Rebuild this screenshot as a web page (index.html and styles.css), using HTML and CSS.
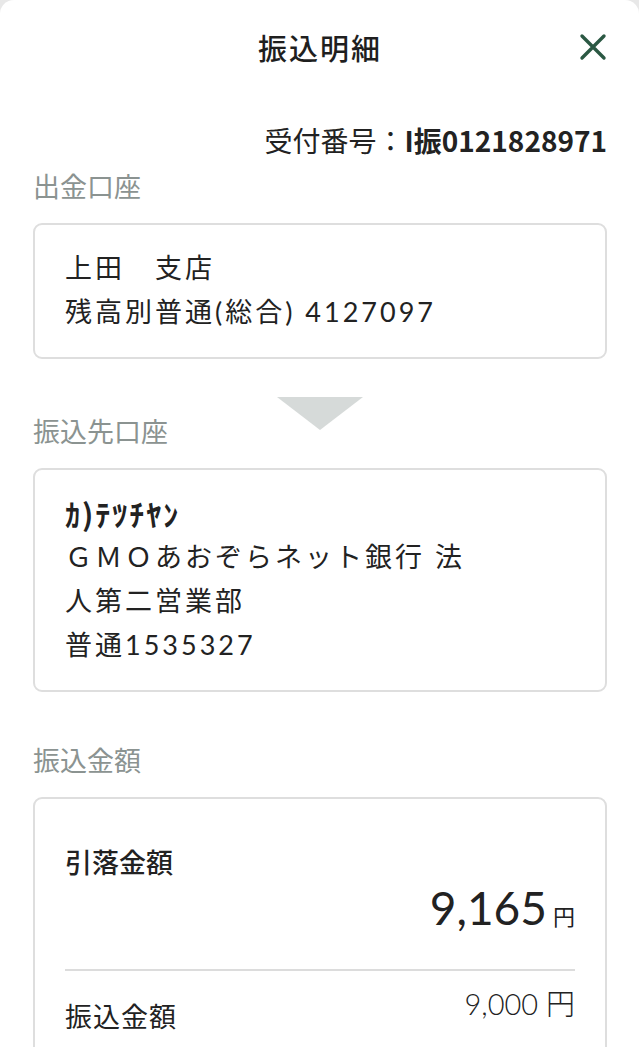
FILE: index.html
```html
<!DOCTYPE html>
<html lang="ja">
<head>
    <meta charset="UTF-8">
    <meta name="viewport" content="width=device-width, initial-scale=1.0">
    <title>振込明細</title>
    <link rel="stylesheet" href="styles.css">
</head>
<body>
    <div class="sheet">
        <div class="header">
            <h1 class="title">振込明細</h1>
            <button class="close" aria-label="閉じる">
                <svg width="28" height="28" viewBox="0 0 28 28">
                    <path d="M3 3 L25 25 M25 3 L3 25" stroke="#2b5843" stroke-width="3.4" stroke-linecap="round" fill="none"/>
                </svg>
            </button>
        </div>

        <p class="receipt">受付番号：<span class="receipt-no">I振0121828971</span></p>

        <h2 class="section-label">出金口座</h2>
        <div class="card">
            <p class="line">上田　支店</p>
            <p class="line">残高別普通(総合) 4127097</p>
        </div>

        <div class="arrow"></div>

        <h2 class="section-label label-after-arrow">振込先口座</h2>
        <div class="card">
            <p class="line name">ｶ)ﾃﾂﾁﾔﾝ</p>
            <p class="line">ＧＭＯあおぞらネット銀行 法</p>
            <p class="line">人第二営業部</p>
            <p class="line">普通1535327</p>
        </div>

        <h2 class="section-label label-spaced">振込金額</h2>
        <div class="card amount-card">
            <p class="debit-label">引落金額</p>
            <p class="debit-amount">9,165<span class="yen">円</span></p>
            <div class="divider"></div>
            <div class="row">
                <span class="row-label">振込金額</span>
                <span class="row-amount">9,000 円</span>
            </div>
        </div>
    </div>
</body>
</html>
```

FILE: styles.css
```css
body {
    margin: 0;
    background-color: #e8e8e8;
    font-family: Lato, "Noto Sans CJK JP", sans-serif;
    color: #222;
}
p, h1, h2 {
    margin: 0;
}
.sheet {
    background-color: #fff;
    border-radius: 14px 14px 0 0;
    min-height: 1047px;
    padding: 0 32px 0 33px;
    box-sizing: border-box;
    overflow: hidden;
}
.header {
    display: grid;
    grid-template-columns: 1fr auto 1fr;
    align-items: center;
    height: 94px;
}
.title {
    grid-column: 2;
    font-family: "Noto Sans CJK JP", sans-serif;
    font-size: 29px;
    font-weight: 500;
    color: #1f1f1f;
    letter-spacing: 2px;
}
.close {
    justify-self: end;
    background: none;
    border: none;
    padding: 0;
    display: flex;
    cursor: pointer;
}
.receipt {
    margin-top: 28px;
    text-align: right;
    font-family: "Noto Sans CJK JP", sans-serif;
    font-size: 28px;
    line-height: 36px;
    color: #222;
}
.receipt-no {
    font-weight: 700;
}
.section-label {
    margin-top: 10px;
    margin-bottom: 19px;
    font-family: "Noto Sans CJK JP", sans-serif;
    font-size: 27px;
    font-weight: 400;
    line-height: 36px;
    color: #8b9391;
}
.label-after-arrow {
    margin-top: -17px;
}
.label-spaced {
    margin-top: 50px;
}
.card {
    border: 2px solid #dedede;
    border-radius: 9px;
    padding: 21px 30px 23px;
}
.line {
    font-size: 27px;
    line-height: 44px;
    letter-spacing: 3px;
}
.name {
    font-family: "Noto Sans CJK JP", sans-serif;
    font-size: 30px;
    font-weight: 700;
    letter-spacing: 2px;
}
.arrow {
    width: 0;
    height: 0;
    margin: 38px auto 0;
    border-left: 43px solid transparent;
    border-right: 43px solid transparent;
    border-top: 33px solid #d6dad9;
}
.amount-card {
    padding-top: 45px;
    padding-bottom: 40px;
}
.debit-label {
    font-family: "Noto Sans CJK JP", sans-serif;
    font-size: 27px;
    font-weight: 500;
    line-height: 36px;
}
.debit-amount {
    margin-top: 3px;
    text-align: right;
    font-size: 46px;
    line-height: 50px;
}
.yen {
    margin-left: 6px;
    font-family: "Noto Sans CJK JP", sans-serif;
    font-size: 22px;
}
.divider {
    margin-top: 29px;
    border-top: 2px solid #dcdcdc;
}
.row {
    display: flex;
    justify-content: space-between;
    align-items: flex-start;
    padding-top: 15px;
}
.row-label {
    margin-top: 13px;
    font-size: 27px;
    line-height: 36px;
    letter-spacing: 1px;
}
.row-amount {
    font-size: 29px;
    font-weight: 300;
    line-height: 36px;
}
```
